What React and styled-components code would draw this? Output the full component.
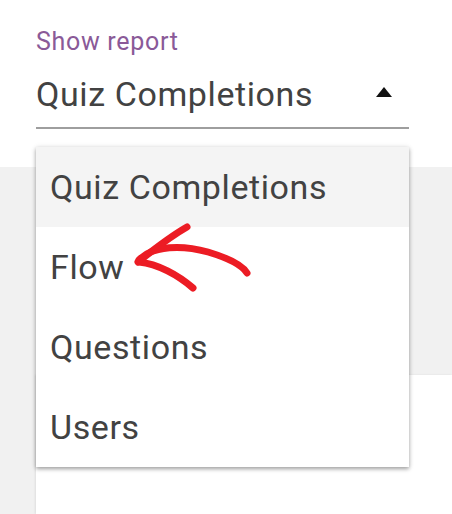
import React from 'react'
import styled, { createGlobalStyle } from 'styled-components';

const GlobalStyle = createGlobalStyle`
  html, body {
    margin: 0;
    padding: 0;
    background: #ffffff;
    font-family: Roboto, 'Noto Sans', sans-serif;
  }
`;

const Page = styled.div`
  position: relative;
  width: 452px;
  height: 514px;
  overflow: hidden;
  display: flex;
  flex-direction: column;
`;

const Header = styled.div`
  height: 167px;
  padding: 27px 0 0 36px;
  box-sizing: border-box;
  background: #ffffff;
`;

const Label = styled.div`
  font-size: 25px;
  line-height: 30px;
  letter-spacing: 0.7px;
  color: #8a5a98;
`;

const SelectField = styled.div`
  width: 373px;
  height: 72px;
  display: flex;
  align-items: flex-end;
  justify-content: space-between;
  border-bottom: 2px solid #9e9e9e;
  box-sizing: border-box;
  padding-bottom: 13px;
`;

const SelectValue = styled.span`
  font-size: 34px;
  line-height: 40px;
  letter-spacing: 0.6px;
  color: #424242;
`;

const Caret = styled.span`
  width: 0;
  height: 0;
  margin: 0 17px 17px 0;
  border-left: 8px solid transparent;
  border-right: 8px solid transparent;
  border-bottom: 10px solid #111;
`;

const Body = styled.div`
  flex: 1;
  background: #f1f1f1;
  display: flex;
  flex-direction: column;
`;

const Spacer = styled.div`
  height: 208px;
`;

const Card = styled.div`
  flex: 1;
  margin-left: 36px;
  background: #ffffff;
  box-shadow: -1px 0 2px rgba(0, 0, 0, 0.08);
`;

const Menu = styled.ul`
  position: absolute;
  left: 36px;
  top: 147px;
  width: 373px;
  margin: 0;
  padding: 0;
  list-style: none;
  background: #ffffff;
  box-shadow: 0 2px 4px rgba(0, 0, 0, 0.35), 0 0 6px rgba(0, 0, 0, 0.08);
`;

const MenuItem = styled.li`
  height: 80px;
  display: flex;
  align-items: center;
  padding-left: 14px;
  font-size: 34px;
  letter-spacing: 0.6px;
  color: #424242;
  background: ${p => (p.active ? '#f4f4f4' : '#ffffff')};
`;

const Arrow = styled.svg`
  position: absolute;
  left: 128px;
  top: 220px;
  overflow: visible;
`;

const options = ['Quiz Completions', 'Flow', 'Questions', 'Users'];

const App = () => {
  return (
    <Page>
      <GlobalStyle />
      <Header>
        <Label>Show report</Label>
        <SelectField>
          <SelectValue>Quiz Completions</SelectValue>
          <Caret />
        </SelectField>
      </Header>
      <Body>
        <Spacer />
        <Card />
      </Body>
      <Menu>
        {options.map((o, i) => (
          <MenuItem key={o} active={i === 0}>{o}</MenuItem>
        ))}
      </Menu>
      {/* hand drawn arrow pointing at Flow */}
      <Arrow width="130" height="80" viewBox="0 0 130 80">
        <g fill="none" stroke="#ec1c24" strokeWidth="7" strokeLinecap="round" strokeLinejoin="round">
          <path d="M10 42 C 25 30, 45 15, 59 7" />
          <path d="M11 42 C 30 44, 50 55, 65 68" />
          <path d="M11 40 C 25 25, 55 25, 80 32 C 100 38, 114 45, 119 53" />
        </g>
      </Arrow>
    </Page>
  )
}

export default App
